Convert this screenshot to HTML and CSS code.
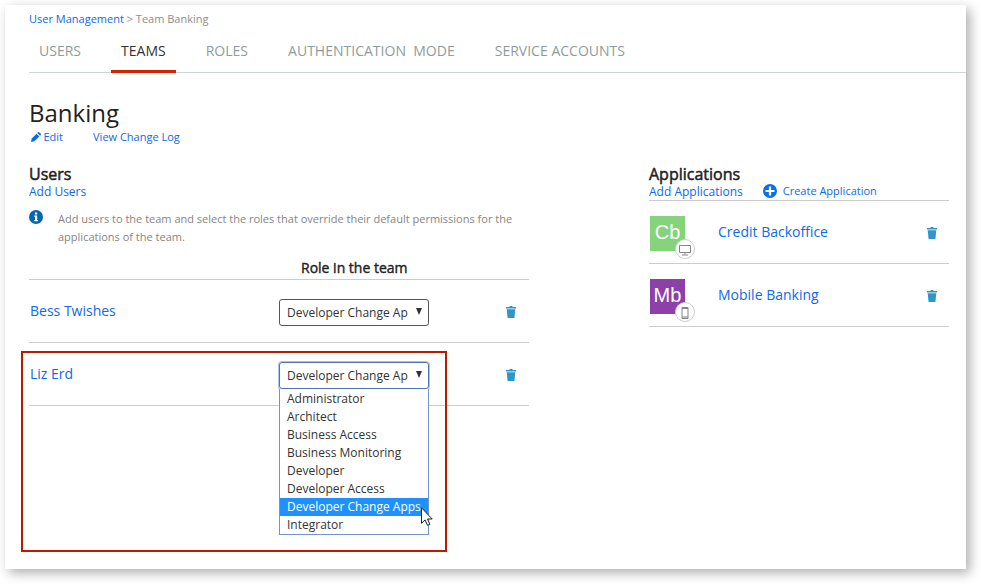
FILE: index.html
```html
<!DOCTYPE html>
<html lang="en">
<head>
<meta charset="utf-8">
<title>Team Banking</title>
<link rel="stylesheet" href="styles.css">
</head>
<body>
<svg class="defs" aria-hidden="true">
  <symbol id="trash" viewBox="0 0 10 12"><path d="M3.5 1V0h3v1H10v1.5H0V1zM.7 3.3h8.6L8.4 12H1.6z"/></symbol>
</svg>
<main class="card">
  <div class="breadcrumb"><a>User Management</a> &gt; Team Banking</div>
  <nav class="tabs">
    <a class="tab">USERS</a>
    <a class="tab active">TEAMS</a>
    <a class="tab">ROLES</a>
    <a class="tab">AUTHENTICATION&nbsp; MODE</a>
    <a class="tab">SERVICE ACCOUNTS</a>
  </nav>
  <h1>Banking</h1>
  <div class="actions">
    <a class="edit"><svg viewBox="0 0 10 10"><path d="M0 10l.7-3.400L5.600 1.700l2.700 2.700L3.400 9.300zM6.300 1L7.100.2q.6-.4 1.100 0l1.600 1.600q.4.600 0 1.100L9 3.700z"/></svg>Edit</a>
    <a>View Change Log</a>
  </div>
  <div class="columns">
    <section class="users">
      <h2>Users</h2>
      <a class="add">Add Users</a>
      <div class="info">
        <svg viewBox="0 0 14 14"><circle cx="7" cy="7" r="7"/><path d="M5.900 2.400h2.300v2H5.900zM5.200 5.500h3v4.500h.8v1.300H5.200V10H6V6.800h-.8z"/></svg>
        <p>Add users to the team and select the roles that override their default permissions for the<br>applications of the team.</p>
      </div>
      <div class="head"><span>Role in the team</span></div>
      <div class="row">
        <a class="name">Bess Twishes</a>
        <div class="select"><span>Developer Change Ap</span><i></i></div>
        <svg class="trash"><use href="#trash"/></svg>
      </div>
      <div class="row">
        <a class="name">Liz Erd</a>
        <div class="select open"><span>Developer Change Ap</span><i></i>
          <ul class="menu">
            <li>Administrator</li><li>Architect</li><li>Business Access</li><li>Business Monitoring</li><li>Developer</li><li>Developer Access</li><li class="selected">Developer Change Apps</li><li>Integrator</li>
          </ul>
        </div>
        <svg class="trash"><use href="#trash"/></svg>
      </div>
    </section>
    <section class="apps">
      <h2>Applications</h2>
      <div class="links">
        <a class="add">Add Applications</a>
        <a class="create"><svg viewBox="0 0 14 14"><circle cx="7" cy="7" r="7"/><path d="M5.900 2.500h2.200v3.400h3.400v2.200H8.100v3.400H5.900V8.100H2.500V5.900h3.400z"/></svg>Create Application</a>
      </div>
      <div class="row">
        <div class="tile green">Cb<span class="badge"><svg viewBox="0 0 12 12"><path d="M.5 1.500h11v7H.500zM6 8.500v2M3 11h6"/></svg></span></div>
        <a class="name">Credit Backoffice</a>
        <svg class="trash"><use href="#trash"/></svg>
      </div>
      <div class="row">
        <div class="tile purple">Mb<span class="badge"><svg viewBox="0 0 12 12"><path d="M3 .5h6v11H3zM3 1.500h6M3 10h6M5.500 10.800h1"/></svg></span></div>
        <a class="name">Mobile Banking</a>
        <svg class="trash"><use href="#trash"/></svg>
      </div>
    </section>
  </div>
  <div class="highlight"></div>
  <svg class="cursor" viewBox="0 0 12 19"><path d="M.5.8v15.500l3.600-3.400 2.400 5.400 2.400-1-2.400-5.300h4.700z"/></svg>
</main>
</body>
</html>
```
FILE: styles.css
```css
* { box-sizing: border-box; }
body { margin: 0; padding: 5px; width: 981px; height: 584px; overflow: hidden; background: #fff; font-family: "Open Sans", sans-serif; color: #222; }
.defs { position: absolute; width: 0; height: 0; }
.card { position: relative; width: 961px; height: 564px; padding: 6px 0 0 24px; background: #fff; box-shadow: 4px 4px 11px rgba(0,0,0,.32); }
a { color: #1068eb; white-space: nowrap; }
h1, h2, p, ul { margin: 0; padding: 0; font-weight: 400; }
.breadcrumb { height: 16px; font-size: 11px; line-height: 16px; color: #8e8e8e; }
.tabs { display: flex; gap: 20px; height: 46px; border-bottom: 1px solid #d0d5d5; }
.tab { height: 46px; padding: 14px 10px 0; font-size: 14px; line-height: 19px; letter-spacing: .01px; color: #909c9c; }
.tab.active { color: #333; border-bottom: 3px solid #d42100; }
h1 { margin-top: 22px; font-size: 24px; line-height: 36px; }
.actions { display: flex; gap: 30px; height: 14px; margin-top: -1px; font-size: 11px; line-height: 14px; }
.edit { display: flex; align-items: center; padding-left: 2px; }
.edit svg { width: 10px; height: 10px; margin-right: 2.500px; fill: #1068eb; }
.columns { display: flex; gap: 120px; margin-top: 20px; }
.users { width: 500px; }
.apps { width: 300px; }
h2 { font-size: 16px; line-height: 20px; -webkit-text-stroke: .5px #222; }
.add { display: block; font-size: 12px; line-height: 16px; }
.info { display: flex; height: 59px; margin-top: 10px; }
.info svg { width: 14px; height: 14px; margin-right: 15px; fill: #0067b0; }
.info path, .create path { fill: #fff; }
.info p { font-size: 11px; line-height: 18px; color: #858585; white-space: nowrap; }
.head { height: 11px; border-bottom: 1px solid #ccc; display: flex; align-items: flex-end; padding-left: 272px; }
.head span { font-size: 14px; line-height: 18px; padding-bottom: 2px; -webkit-text-stroke: .4px #222; }
.row { display: flex; align-items: center; height: 63px; border-bottom: 1px solid #ccc; }
.name { font-size: 14px; line-height: 20px; }
.users .name { width: 250px; padding-left: 1px; }
.select { position: relative; display: flex; justify-content: space-between; align-items: center; width: 150px; height: 27px; margin-top: 2px; padding: 0 6px 0 7px; border: 1px solid #555; border-radius: 3px; font-size: 12px; white-space: nowrap; color: #333; }
.select i { border: solid transparent; border-width: 7px 3.500px 0; border-top-color: #333; margin-top: -2px; }
.open { border-color: #4f73b3; box-shadow: 0 0 0 1px #a3c4f5; }
.menu { position: absolute; z-index: 1; left: -1px; top: 26px; width: 150px; height: 146px; padding-top: 1px; border: 1px solid #7394cb; border-top: 0; background: #fff; list-style: none; }
.menu li { height: 18px; padding-left: 7px; line-height: 18px; }
.menu .selected { background: #1e90ff; color: #fff; }
.trash { width: 10px; height: 12px; margin-top: 1px; fill: #3095cc; }
.users .trash { margin-left: 77px; }
.links { display: flex; gap: 20px; height: 17px; border-bottom: 1px solid #ccc; }
.create { display: flex; align-items: center; height: 14px; font-size: 11px; line-height: 14px; }
.create svg { width: 14px; height: 14px; margin-right: 6px; fill: #0870e8; }
.tile { position: relative; width: 35px; height: 35px; margin: 3px 33px 0 1px; color: #fff; font: 20px/33px "Liberation Sans", sans-serif; text-align: center; }
.green { background: #85d37b; }
.purple { background: #8d41a8; }
.badge { position: absolute; left: 25px; top: 23px; width: 20px; height: 20px; border: 1px solid #ccc; border-radius: 50%; background: #fff; display: flex; align-items: center; justify-content: center; }
.badge svg { width: 12px; height: 12px; margin-top: 1px; fill: none; stroke: #858585; }
.apps .name { width: 209px; }
.highlight { position: absolute; left: 16px; top: 346px; width: 426px; height: 201px; border: 2px solid #ba1c00; }
.cursor { position: absolute; z-index: 2; left: 416px; top: 502px; width: 12px; height: 19px; fill: #fff; stroke: #223; }
```
